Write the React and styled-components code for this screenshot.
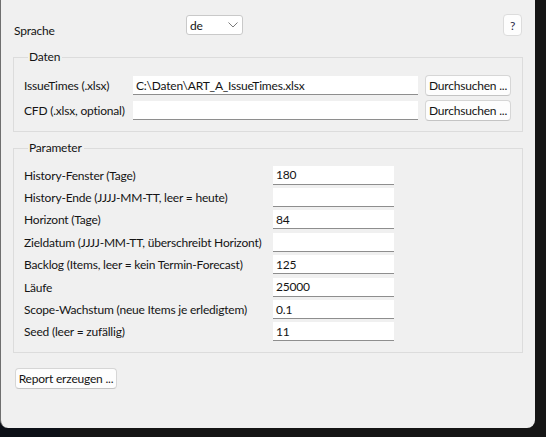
import * as React from "react"
import styled, { createGlobalStyle } from "styled-components"

const GlobalStyle = createGlobalStyle`
  html, body {
    margin: 0;
    padding: 0;
    background: #151515;
  }
  body {
    width: 546px;
    height: 437px;
    overflow: hidden;
    font-family: Lato, "Noto Sans", sans-serif;
  }
`

const Desktop = styled.div`
  width: 546px;
  height: 437px;
  background: linear-gradient(to right, #0c1017 0px, #0c1017 60px, #151515 60px);
`

const Window = styled.div`
  width: 535px;
  height: 428px;
  box-sizing: border-box;
  background: #f0f0f0;
  border-left: 1px solid #6f6f6f;
  border-bottom-left-radius: 8px;
  border-bottom-right-radius: 8px;
  padding: 14px 12px 0 12px;
  font-size: 12px;
  letter-spacing: -0.2px;
  color: #141414;
`

const TopRow = styled.div`
  display: grid;
  grid-template-columns: 172px 57px 1fr 19px;
  align-items: start;
  height: 23px;
  padding-left: 1px;
  margin-right: 1px;
`

const TopLabel = styled.span`
  margin-top: 9px;
`

const Combo = styled.div`
  margin-top: 1px;
  height: 20px;
  box-sizing: border-box;
  background: #fff;
  border: 1px solid #c9c9c9;
  border-radius: 3px;
  display: flex;
  align-items: center;
  justify-content: space-between;
  padding: 0 4px 0 3px;
`

const HelpButton = styled.div`
  grid-column: 4;
  height: 22px;
  box-sizing: border-box;
  background: #fdfdfd;
  border: 1px solid #dcdcdc;
  border-radius: 4px;
  display: flex;
  align-items: center;
  justify-content: center;
  color: #2a2a4a;
`

const Frame = styled.fieldset`
  margin: ${p => p.$top}px 0 0 0;
  padding: ${p => p.$pad};
  border: 1px solid #dcdcdc;
  min-width: 0;
  display: grid;
  grid-template-columns: ${p => p.$cols};
  grid-auto-rows: ${p => p.$row};
  align-items: center;
  column-gap: ${p => p.$gap}px;
`

const Legend = styled.legend`
  padding: 0 2px 0 1px;
  margin-left: 4px;
  line-height: 14px;
`

const Label = styled.span`
  white-space: nowrap;
`

const Entry = styled.div`
  height: 19px;
  box-sizing: border-box;
  background: #fff;
  border-bottom: 1px solid #8e8e8e;
  padding: 0 4px 0 3px;
  display: flex;
  align-items: center;
  white-space: nowrap;
  overflow: hidden;
`

const Button = styled.div`
  height: 21px;
  box-sizing: border-box;
  background: #fdfdfd;
  border: 1px solid #d6d6d6;
  border-bottom-color: #c4c4c4;
  border-radius: 4px;
  display: flex;
  align-items: center;
  justify-content: center;
  white-space: nowrap;
  width: ${p => p.$w}px;
`

const Footer = styled.div`
  margin-top: 15px;
  padding-left: 2px;
`

const Chevron = () => (
  <svg width="10" height="6" viewBox="0 0 10 6">
    <path d="M0.5 0.5 L5 5 L9.5 0.5" fill="none" stroke="#7a7a7a" strokeWidth="1" />
  </svg>
)

const params = [
  ["History-Fenster (Tage)", "180"],
  ["History-Ende (JJJJ-MM-TT, leer = heute)", ""],
  ["Horizont (Tage)", "84"],
  ["Zieldatum (JJJJ-MM-TT, überschreibt Horizont)", ""],
  ["Backlog (Items, leer = kein Termin-Forecast)", "125"],
  ["Läufe", "25000"],
  ["Scope-Wachstum (neue Items je erledigtem)", "0.1"],
  ["Seed (leer = zufällig)", "11"],
]

export default function App() {
  return (
    <Desktop>
      <GlobalStyle />
      <Window>
        <TopRow>
          <TopLabel>Sprache</TopLabel>
          <Combo>
            <span>de</span>
            <Chevron />
          </Combo>
          <HelpButton>?</HelpButton>
        </TopRow>

        <Frame $top={13} $pad="9px 10px 8px 10px" $cols="102px 285px 86px" $row="25px" $gap={7}>
          <Legend>Daten</Legend>
          <Label>IssueTimes (.xlsx)</Label>
          <Entry>C:\Daten\ART_A_IssueTimes.xlsx</Entry>
          <Button $w={86}>Durchsuchen ...</Button>
          <Label>CFD (.xlsx, optional)</Label>
          <Entry />
          <Button $w={86}>Durchsuchen ...</Button>
        </Frame>

        <Frame $top={9} $pad="9px 10px 9px 10px" $cols="249px 121px" $row="22.4px" $gap={0}>
          <Legend>Parameter</Legend>
          {params.map(([label, value]) => (
            <React.Fragment key={label}>
              <Label>{label}</Label>
              <Entry>{value}</Entry>
            </React.Fragment>
          ))}
        </Frame>

        <Footer>
          <Button $w={102}>Report erzeugen ...</Button>
        </Footer>
      </Window>
    </Desktop>
  )
}
